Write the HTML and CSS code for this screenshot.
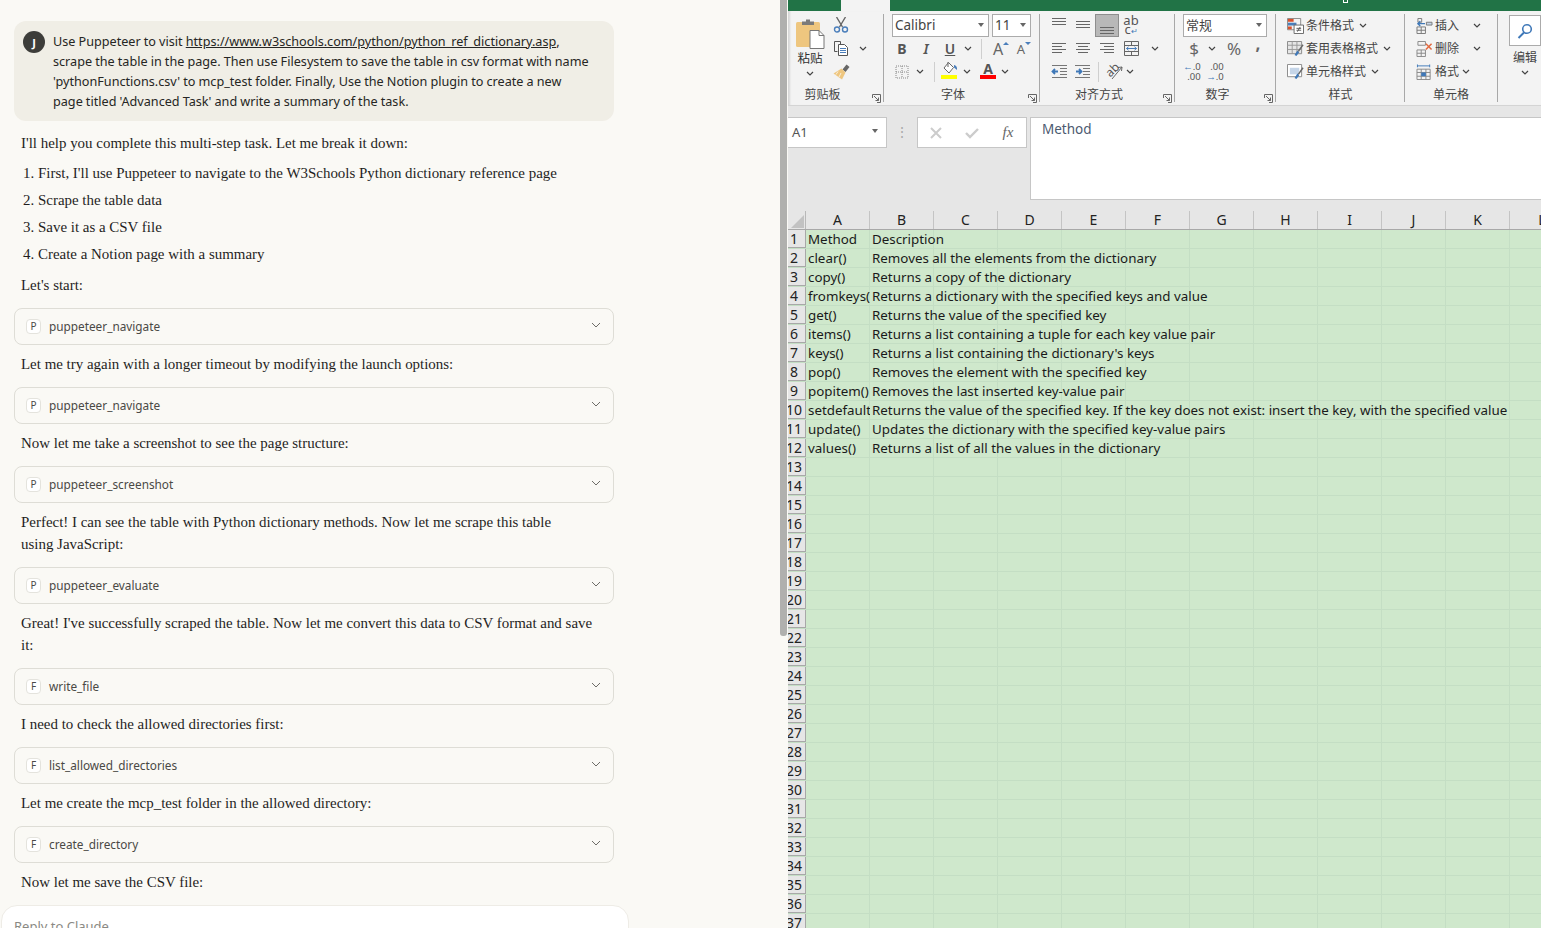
FILE: index.html
```html
<!DOCTYPE html>
<html lang="zh-CN">
<head>
<meta charset="UTF-8">
<title>Claude + Excel</title>
<link rel="stylesheet" href="styles.css">
</head>
<body>

<!-- chat on the left -->
<section class="chat">
    <div class="chat-scroll">
        <div class="user-msg">
            <span class="avatar">J</span>
            <p>Use Puppeteer to visit <a href="#">https://www.w3schools.com/python/python_ref_dictionary.asp</a>, scrape the table in the page. Then use Filesystem to save the table in csv format with name 'pythonFunctions.csv' to mcp_test folder. Finally, Use the Notion plugin to create a new page titled 'Advanced Task' and write a summary of the task.</p>
        </div>

        <p class="say first">I'll help you complete this multi-step task. Let me break it down:</p>
        <ol class="steps">
            <li>First, I'll use Puppeteer to navigate to the W3Schools Python dictionary reference page</li>
            <li>Scrape the table data</li>
            <li>Save it as a CSV file</li>
            <li>Create a Notion page with a summary</li>
        </ol>
        <p class="say">Let's start:</p>
        <div class="tool"><span class="tool-badge">P</span><span class="tool-name">puppeteer_navigate</span><svg class="tool-chev" viewBox="0 0 10 6"><path d="M1 1l4 4 4-4"/></svg></div>
        <p class="say">Let me try again with a longer timeout by modifying the launch options:</p>
        <div class="tool"><span class="tool-badge">P</span><span class="tool-name">puppeteer_navigate</span><svg class="tool-chev" viewBox="0 0 10 6"><path d="M1 1l4 4 4-4"/></svg></div>
        <p class="say">Now let me take a screenshot to see the page structure:</p>
        <div class="tool"><span class="tool-badge">P</span><span class="tool-name">puppeteer_screenshot</span><svg class="tool-chev" viewBox="0 0 10 6"><path d="M1 1l4 4 4-4"/></svg></div>
        <p class="say">Perfect! I can see the table with Python dictionary methods. Now let me scrape this table<br>using JavaScript:</p>
        <div class="tool"><span class="tool-badge">P</span><span class="tool-name">puppeteer_evaluate</span><svg class="tool-chev" viewBox="0 0 10 6"><path d="M1 1l4 4 4-4"/></svg></div>
        <p class="say">Great! I've successfully scraped the table. Now let me convert this data to CSV format and save<br>it:</p>
        <div class="tool"><span class="tool-badge">F</span><span class="tool-name">write_file</span><svg class="tool-chev" viewBox="0 0 10 6"><path d="M1 1l4 4 4-4"/></svg></div>
        <p class="say">I need to check the allowed directories first:</p>
        <div class="tool"><span class="tool-badge">F</span><span class="tool-name">list_allowed_directories</span><svg class="tool-chev" viewBox="0 0 10 6"><path d="M1 1l4 4 4-4"/></svg></div>
        <p class="say">Let me create the mcp_test folder in the allowed directory:</p>
        <div class="tool"><span class="tool-badge">F</span><span class="tool-name">create_directory</span><svg class="tool-chev" viewBox="0 0 10 6"><path d="M1 1l4 4 4-4"/></svg></div>
        <p class="say">Now let me save the CSV file:</p>
    </div>
    <div class="reply">Reply to Claude</div>
    <div class="scroll-thumb"></div>
</section>

<!-- excel on the right -->
<section class="excel">
    <div class="tabbar"><span class="tab-active"></span><span class="tab-mark"></span></div>

    <div class="ribbon">
        <div class="group g-clip">
            <div class="group-body clip-body">
                <div class="paste">
                    <svg class="paste-icon" viewBox="0 0 30 30"><rect x="1" y="3" width="24" height="25" rx="1.500" fill="#eec67f"/><path d="M7 6V2.500h4V.5h4v2h4V6z" fill="#7a7a7a"/><path d="M15 11.500h9l5 5V29.500H15z" fill="#fff" stroke="#777"/><path d="M24 11.500v5h5" fill="none" stroke="#777"/></svg>
                    <span class="paste-label">粘贴</span>
                    <svg class="chev" viewBox="0 0 8 5"><path d="M1 1l3 3 3-3"/></svg>
                </div>
                <div class="clip-tools">
                    <div class="row"><span class="tb w24"><svg class="cut" width="16" height="16" viewBox="0 0 16 16" fill="none"><path d="M3.500 0l6 10M12.500 0l-6 10" stroke="#666" stroke-width="1.400"/><circle cx="4" cy="12.500" r="2.500" stroke="#4a7ebb" stroke-width="1.400"/><circle cx="12" cy="12.500" r="2.500" stroke="#4a7ebb" stroke-width="1.400"/></svg></span></div>
                    <div class="row"><span class="tb w24"><svg width="16" height="15" viewBox="0 0 16 15" fill="none" stroke="#555"><path d="M1.500.5h6v3M1.500.5v10h3"/><path d="M5.500 3.500h6l3 3v8h-9z" fill="#fff"/><path d="M7 7.500h6M7 9.500h6M7 11.500h6" stroke="#4a7ebb"/></svg></span><span class="tb w20"><svg class="chev" viewBox="0 0 8 5"><path d="M1 1l3 3 3-3"/></svg></span></div>
                    <div class="row"><span class="tb w24"><svg width="17" height="16" viewBox="0 0 17 16"><path d="M9.500 5.500l4-5 3 2.500-4 5z" fill="#666"/><path d="M8.500 4.500l4 4-3.500 7-8.500-6z" fill="#eec67f"/><path d="M5 7.500l-2 3M8 9l-2 4" stroke="#fff" stroke-width=".7"/></svg></span></div>
                </div>
            </div>
            <div class="group-foot"><span class="group-label">剪贴板</span><svg class="launcher" viewBox="0 0 9 9"><path d="M.5 4V.5H8.500V8.500H5M2 2l4.500 4.500M3.500 6.500h3v-3"/></svg></div>
        </div>

        <div class="group g-font">
            <div class="group-body">
                <div class="row font-selects">
                    <span class="select sel-font">Calibri<i class="caret"></i></span>
                    <span class="select sel-size">11<i class="caret"></i></span>
                </div>
                <div class="row">
                    <span class="tb w24 glyph bold">B</span>
                    <span class="tb w24 glyph italic">I</span>
                    <span class="tb w24 glyph under">U</span>
                    <span class="tb w12"><svg class="chev" viewBox="0 0 8 5"><path d="M1 1l3 3 3-3"/></svg></span>
                    <span class="vsep sep-font1"></span>
                    <span class="tb w24 grow-a">A<i class="up"></i></span>
                    <span class="tb w22 shrink-a">A<i class="down"></i></span>
                </div>
                <div class="row">
                    <span class="tb w24"><svg width="14" height="14" viewBox="0 0 14 14" fill="none" stroke="#888" stroke-dasharray="1 1"><path d="M1 1h12v12H1zM7 1v12M1 7h12"/></svg></span>
                    <span class="tb w12"><svg class="chev" viewBox="0 0 8 5"><path d="M1 1l3 3 3-3"/></svg></span>
                    <span class="vsep sep-font2"></span>
                    <span class="tb w24 color-btn"><svg width="17" height="12" viewBox="0 0 17 12" fill="none"><path d="M3 6l4.500-5.500L12.500 5.500 8 11z" fill="#fff" stroke="#666"/><path d="M7 0V5" stroke="#666"/><path d="M13 3c2 .5 3.500 2 3 5l-3-2.500z" fill="#4a7ebb"/></svg><i class="bar yellow"></i></span>
                    <span class="tb w12"><svg class="chev" viewBox="0 0 8 5"><path d="M1 1l3 3 3-3"/></svg></span>
                    <span class="tb w22 color-btn font-a">A<i class="bar red"></i></span>
                    <span class="tb w12"><svg class="chev" viewBox="0 0 8 5"><path d="M1 1l3 3 3-3"/></svg></span>
                </div>
            </div>
            <div class="group-foot"><span class="group-label">字体</span><svg class="launcher" viewBox="0 0 9 9"><path d="M.5 4V.5H8.500V8.500H5M2 2l4.500 4.500M3.500 6.500h3v-3"/></svg></div>
        </div>

        <div class="group g-align">
            <div class="group-body">
                <div class="row">
                    <span class="tb w24"><svg width="14" height="19" viewBox="0 0 14 19" class="lines"><path d="M0 2.500h14M0 5.500h14M0 8.500h14"/></svg></span>
                    <span class="tb w24"><svg width="14" height="19" viewBox="0 0 14 19" class="lines"><path d="M0 5.500h14M0 8.500h14M0 11.500h14"/></svg></span>
                    <span class="tb w24 active"><svg width="14" height="19" viewBox="0 0 14 19" class="lines"><path d="M0 11.500h14M0 14.500h14M0 17.500h14"/></svg></span>
                    <span class="tb w24 wrap-ab">ab<br>c<em>↵</em></span>
                </div>
                <div class="row">
                    <span class="tb w24"><svg width="14" height="13" viewBox="0 0 14 13" class="lines"><path d="M0 1.500h14M0 4.500h10M0 7.500h14M0 10.500h10"/></svg></span>
                    <span class="tb w24"><svg width="14" height="13" viewBox="0 0 14 13" class="lines"><path d="M0 1.500h14M2 4.500h10M0 7.500h14M2 10.500h10"/></svg></span>
                    <span class="tb w24"><svg width="14" height="13" viewBox="0 0 14 13" class="lines"><path d="M0 1.500h14M4 4.500h10M0 7.500h14M4 10.500h10"/></svg></span>
                    <span class="tb w24"><svg width="15" height="15" viewBox="0 0 15 15" fill="none"><path d="M.5.5h14v14H.5zM.5 4.500h14M.5 10.500h14M7.500.5v4M7.500 10.500v4" stroke="#666"/><path d="M2.500 7.500h10M4.500 5.800L2.500 7.500l2 1.700M10.500 5.800l2 1.700-2 1.700" stroke="#4a7ebb"/></svg></span>
                    <span class="tb w24"><svg class="chev" viewBox="0 0 8 5"><path d="M1 1l3 3 3-3"/></svg></span>
                </div>
                <div class="row">
                    <span class="tb w24"><svg width="16" height="14" viewBox="0 0 16 14" fill="none"><path d="M1 .5h15M9 3.500h7M9 6.500h7M9 9.500h7M1 12.500h15" stroke="#777"/><path d="M7 6.500H1.500M4 4L1.500 6.500 4 9" stroke="#3f78b8" stroke-width="1.800"/></svg></span>
                    <span class="tb w24"><svg width="16" height="14" viewBox="0 0 16 14" fill="none"><path d="M0 .5h15M8 3.500h7M8 6.500h7M8 9.500h7M0 12.500h15" stroke="#777"/><path d="M1 6.500h5.500M4 4l2.500 2.500L4 9" stroke="#3f78b8" stroke-width="1.800"/></svg></span>
                    <span class="vsep sep-align"></span>
                    <span class="tb w20 orient"><svg width="20" height="18" viewBox="0 0 20 18" fill="none"><path d="M8 16L18 4" stroke="#666"/><path d="M18 4l-4 .5M18 4l-.5 4" stroke="#666"/></svg><b>ab</b></span>
                    <span class="tb w12"><svg class="chev" viewBox="0 0 8 5"><path d="M1 1l3 3 3-3"/></svg></span>
                </div>
            </div>
            <div class="group-foot"><span class="group-label">对齐方式</span><svg class="launcher" viewBox="0 0 9 9"><path d="M.5 4V.5H8.500V8.500H5M2 2l4.500 4.500M3.500 6.500h3v-3"/></svg></div>
        </div>

        <div class="group g-num">
            <div class="group-body">
                <div class="row"><span class="select sel-num">常规<i class="caret"></i></span></div>
                <div class="row">
                    <span class="tb w24 num-sign">$</span>
                    <span class="tb w12"><svg class="chev" viewBox="0 0 8 5"><path d="M1 1l3 3 3-3"/></svg></span>
                    <span class="tb w32 num-sign">%</span>
                    <span class="tb w16 num-sign comma">,</span>
                </div>
                <div class="row dec-row">
                    <span class="tb w24 dec"><span><em>←</em>.0<br>.00</span></span>
                    <span class="tb w24 dec"><span>.00<br><em>→</em>.0</span></span>
                </div>
            </div>
            <div class="group-foot"><span class="group-label">数字</span><svg class="launcher" viewBox="0 0 9 9"><path d="M.5 4V.5H8.500V8.500H5M2 2l4.500 4.500M3.500 6.500h3v-3"/></svg></div>
        </div>

        <div class="group g-style">
            <div class="group-body">
                <div class="row cmd">
                    <svg viewBox="0 0 18 17" fill="none"><path d="M.5.5h14v12H.5z" stroke="#888"/><path d="M1 1h6v3H1z" fill="#d9512c"/><path d="M1 5h9v3H1z" fill="#4a7ebb"/><path d="M1 9h4v3H1z" fill="#d9512c"/><path d="M7.500 7.500h10v9h-10z" fill="#fff" stroke="#666"/><path d="M10 11h5M10 13h5M14 9.500l-3 5" stroke="#555"/></svg>
                    <span>条件格式</span><svg class="chev" viewBox="0 0 8 5"><path d="M1 1l3 3 3-3"/></svg>
                </div>
                <div class="row cmd">
                    <svg viewBox="0 0 18 17" fill="none"><path d="M.5.5h15v13H.5z" fill="#e6e6e6" stroke="#888"/><path d="M.5 4.500h15M5.500.5v13M10.500.5v13M.5 9h15" stroke="#999"/><path d="M8 15l3-5 2 2-3 4z" fill="#3f78b8"/><path d="M12 11l5-7" stroke="#666" stroke-width="1.500"/></svg>
                    <span>套用表格格式</span><svg class="chev" viewBox="0 0 8 5"><path d="M1 1l3 3 3-3"/></svg>
                </div>
                <div class="row cmd">
                    <svg viewBox="0 0 18 17" fill="none"><path d="M.5.5h15v13H.5z" fill="#fff" stroke="#888"/><path d="M3 4h10v7H3z" fill="#c5d5e8"/><path d="M8 15l3-5 2 2-3 4z" fill="#3f78b8"/><path d="M12 11l5-7" stroke="#666" stroke-width="1.500"/></svg>
                    <span>单元格样式</span><svg class="chev" viewBox="0 0 8 5"><path d="M1 1l3 3 3-3"/></svg>
                </div>
            </div>
            <div class="group-foot"><span class="group-label">样式</span></div>
        </div>

        <div class="group g-cells">
            <div class="group-body">
                <div class="row cmd">
                    <svg viewBox="0 0 17 17" fill="none"><path d="M1.500.5h4v4h-4zM.5 9.500h9v7h-9zM5 9.500v7M.5 13h9" stroke="#777"/><path d="M10.500 4.500h6v3h-6z" fill="#c5d5e8" stroke="#777"/><path d="M9 6H1.500M4 3.500L1.500 6 4 8.500" stroke="#3f78b8" stroke-width="1.500"/></svg>
                    <span class="cell-text">插入</span><svg class="chev" viewBox="0 0 8 5"><path d="M1 1l3 3 3-3"/></svg>
                </div>
                <div class="row cmd">
                    <svg viewBox="0 0 17 17" fill="none"><path d="M1.500.5h8v4h-8zM.5 9.500h9v7h-9zM5 9.500v7M.5 13h9" stroke="#888"/><path d="M10 3l6 6M16 3l-6 6" stroke="#e2693f" stroke-width="1.600"/></svg>
                    <span class="cell-text">删除</span><svg class="chev" viewBox="0 0 8 5"><path d="M1 1l3 3 3-3"/></svg>
                </div>
                <div class="row cmd">
                    <svg viewBox="0 0 17 17" fill="none"><path d="M.5 5.500h14v11H.5zM.5 9h14M.5 13h14M5 5.500v11M10 5.500v11" stroke="#888"/><path d="M5 9h5v4H5z" fill="#3f78b8"/><path d="M1 2h13M1 .5v3M14 .5v3" stroke="#3f78b8"/></svg>
                    <span class="cell-text short">格式</span><svg class="chev" viewBox="0 0 8 5"><path d="M1 1l3 3 3-3"/></svg>
                </div>
            </div>
            <div class="group-foot"><span class="group-label">单元格</span></div>
        </div>

        <div class="g-edit">
            <span class="find"><svg width="16" height="16" viewBox="0 0 16 16" fill="none"><circle cx="10" cy="6" r="4.300" stroke="#3f78b8" stroke-width="1.600"/><path d="M7 9.500L1.500 15" stroke="#3f78b8" stroke-width="2"/></svg></span>
            <span class="edit-label">编辑</span>
            <svg class="chev" viewBox="0 0 8 5"><path d="M1 1l3 3 3-3"/></svg>
        </div>
    </div>

    <div class="formula-area">
        <div class="name-box">A1<i class="caret"></i></div>
        <span class="fx-grip">⋮</span>
        <div class="fx-buttons">
            <svg width="12" height="12" viewBox="0 0 12 12" fill="none"><path d="M1 1l10 10M11 1L1 11" stroke="#ccc" stroke-width="2"/></svg>
            <svg width="14" height="12" viewBox="0 0 14 12" fill="none"><path d="M1 6l4 4 8-8" stroke="#ccc" stroke-width="2.400"/></svg>
            <span class="fx">fx</span>
        </div>
        <div class="formula-input">Method</div>
    </div>

    <div class="sheet">
        <div class="col-head">
            <span class="corner"></span>
            <span>A</span><span>B</span><span>C</span><span>D</span><span>E</span><span>F</span><span>G</span><span>H</span><span>I</span><span>J</span><span>K</span><span class="col-l">L</span>
        </div>
        <div class="rows" id="rows"></div>
    </div>
</section>

<script src="sheet.js"></script>
</body>
</html>
```

FILE: sheet.js
```js
const dados = [
    ["Method", "Description"],
    ["clear()", "Removes all the elements from the dictionary"],
    ["copy()", "Returns a copy of the dictionary"],
    ["fromkeys()", "Returns a dictionary with the specified keys and value"],
    ["get()", "Returns the value of the specified key"],
    ["items()", "Returns a list containing a tuple for each key value pair"],
    ["keys()", "Returns a list containing the dictionary's keys"],
    ["pop()", "Removes the element with the specified key"],
    ["popitem()", "Removes the last inserted key-value pair"],
    ["setdefault()", "Returns the value of the specified key. If the key does not exist: insert the key, with the specified value"],
    ["update()", "Updates the dictionary with the specified key-value pairs"],
    ["values()", "Returns a list of all the values in the dictionary"]
];

const rows = document.getElementById("rows");

for (let i = 0; i < 37; i++) {
    const linha = dados[i] || ["", ""];
    const row = document.createElement("div");
    row.className = "sheet-row";
    row.innerHTML = `
        <span class="row-num">${i + 1}</span>
        <span class="cell-a">${linha[0]}</span>
        <span class="cell-b">${linha[1]}</span>
    `;
    rows.appendChild(row);
}
```

FILE: styles.css
```css
* {
    box-sizing: border-box;
}

html,
body {
    height: 100%;
}

body {
    display: flex;
    width: 1541px;
    height: 928px;
    margin: 0;
    overflow: hidden;
    background-color: #faf9f5;
}

/* chat */

.chat {
    position: relative;
    display: flex;
    flex-direction: column;
    width: 788px;
    height: 928px;
    overflow: hidden;
    background-color: #faf9f5;
}

.chat-scroll {
    flex: 1;
    width: 628px;
    min-height: 0;
    padding: 21px 14px 0;
    overflow: hidden;
}

.user-msg {
    display: flex;
    align-items: flex-start;
    gap: 8px;
    width: 600px;
    height: 100px;
    padding: 10px 20px 0 9px;
    background-color: #f0eee6;
    border-radius: 12px;
}

.avatar {
    display: flex;
    flex: none;
    align-items: center;
    justify-content: center;
    width: 22px;
    height: 22px;
    font: 700 11px "Noto Sans", sans-serif;
    color: #fff;
    background-color: #3d3d3a;
    border-radius: 50%;
}

.user-msg p {
    margin: 0;
    font: 12.650px/20px "Noto Sans", sans-serif;
    word-spacing: -0.2px;
    color: #262624;
}

.user-msg a {
    color: #262624;
}

.say {
    width: 590px;
    margin: 8px 0 12px 7px;
    font: 14.950px/22px "Liberation Serif", serif;
    color: #1f1e1d;
}

.say.first {
    margin-top: 11px;
}

.steps {
    margin: -4px 0 9px;
    padding: 0 0 0 24px;
    font: 14.950px/22px "Liberation Serif", serif;
    color: #1f1e1d;
}

.steps li {
    margin-bottom: 5px;
}

.steps li:last-child {
    margin-bottom: 0;
}

.tool {
    display: flex;
    align-items: center;
    width: 600px;
    height: 37px;
    padding: 0 12px 1px 11px;
    background-color: #faf9f5;
    border: 1px solid #deddd6;
    border-radius: 8px;
}

.tool-badge {
    display: flex;
    align-items: center;
    justify-content: center;
    width: 15px;
    height: 15px;
    font: 10px "Noto Sans", sans-serif;
    color: #4a4a48;
    background-color: #fff;
    border: 1px solid #e4e3dd;
    border-radius: 4px;
}

.tool-name {
    flex: 1;
    margin-left: 8px;
    font: 11.800px "Noto Sans", sans-serif;
    color: #4a4945;
}

.tool-chev {
    width: 10px;
    height: 6px;
    margin-bottom: 2px;
    fill: none;
    stroke: #6e6d68;
    stroke-width: 1;
}

.reply {
    flex: none;
    width: 628px;
    height: 40px;
    margin: 0 0 -17px 1px;
    padding: 11px 12px;
    font: 13px "Noto Sans", sans-serif;
    color: #8a8983;
    background-color: #fff;
    border: 1px solid #eeece6;
    border-radius: 16px;
}

.scroll-thumb {
    position: absolute;
    top: 0;
    right: 1px;
    width: 7px;
    height: 636px;
    background-color: #b0b0ae;
    border-radius: 0 0 3px 3px;
}

/* excel */

.excel {
    display: flex;
    flex-direction: column;
    width: 753px;
    height: 928px;
    overflow: hidden;
    background-color: #e6e6e6;
    font-family: "Noto Sans", "Noto Sans CJK SC", sans-serif;
}

.tabbar {
    display: flex;
    flex: none;
    height: 11px;
    padding-left: 53px;
    background-color: #217346;
}

.tab-active {
    display: block;
    width: 49px;
    height: 11px;
    background-color: #f3f3f3;
}

.tab-mark {
    width: 5px;
    height: 3px;
    margin-left: 453px;
    border: 1px solid #fff;
    border-top: 0;
}

.ribbon {
    display: flex;
    flex: none;
    height: 95px;
    padding-top: 3px;
    background-color: #f3f3f3;
    border-bottom: 1px solid #d4d4d4;
    box-shadow: inset 3px 0 2px -1px rgba(0, 0, 0, 0.12);
}

.group {
    display: flex;
    flex: none;
    flex-direction: column;
    height: 88px;
    border-right: 1px solid #a8a8a8;
}

.g-clip { width: 96px; }
.g-font { width: 156px; padding-left: 6px; }
.g-align { width: 135px; padding-left: 7px; }
.g-num { width: 101px; padding-left: 7px; }
.g-style { width: 129px; padding-left: 11px; }
.g-cells { width: 93px; padding-left: 11px; }

.g-clip .group-foot { padding-right: 26px; }
.g-font .group-foot { padding-right: 23px; }
.g-align .group-foot { padding-right: 23px; }
.g-num .group-foot { padding-right: 22px; }
.g-style .group-foot { padding-right: 10px; }
.g-cells .group-foot { padding-right: 11px; }

.group-body {
    height: 69px;
}

.clip-body {
    display: flex;
}

.row {
    display: flex;
    align-items: center;
    height: 23px;
}

.group-foot {
    position: relative;
    display: flex;
    flex: 1;
    align-items: center;
    justify-content: center;
    font: 12px "Noto Sans CJK SC", sans-serif;
    color: #444;
}

.group-label {
    margin-top: 2px;
}

.launcher {
    position: absolute;
    right: 2px;
    bottom: -1px;
    width: 9px;
    height: 9px;
    fill: none;
    stroke: #666;
    stroke-width: 1;
}

.chev {
    flex: none;
    width: 8px;
    height: 5px;
    fill: none;
    stroke: #444;
    stroke-width: 1.200;
}

.tb {
    display: flex;
    flex: none;
    align-items: center;
    justify-content: center;
    height: 23px;
}

.w12 { width: 12px; }
.w16 { width: 16px; }
.w20 { width: 20px; }
.w22 { width: 22px; }
.w24 { width: 24px; }
.w32 { width: 32px; }

.vsep {
    flex: none;
    width: 1px;
    height: 20px;
    background-color: #cfcfcf;
}

.sep-font1 { margin: 0 4px 0 7px; }
.sep-font2 { margin: 0 2px 0 8px; }
.sep-align { margin: 0 5px 0 3px; }

/* clipboard */

.paste {
    display: flex;
    flex-direction: column;
    align-items: center;
    width: 44px;
}

.paste-icon {
    width: 30px;
    height: 30px;
    margin-top: 5px;
}

.paste-label {
    margin-top: 1px;
    font: 12.500px/16px "Noto Sans CJK SC", sans-serif;
    color: #333;
}

.paste .chev {
    margin-top: 5px;
}

.clip-tools {
    margin-left: -3px;
}

.cut {
    margin-bottom: 2px;
}

/* font */

.font-selects {
    gap: 3px;
    padding-left: 2px;
}

.select {
    position: relative;
    display: flex;
    align-items: center;
    height: 23px;
    padding: 0 0 2px 2px;
    font-size: 13.500px;
    color: #444;
    background-color: #fff;
    border: 1px solid #ababab;
}

.sel-font { width: 97px; }
.sel-size { width: 39px; }
.sel-num {
    width: 84px;
    margin-left: 1px;
    font-family: "Noto Sans CJK SC", sans-serif;
    font-size: 13px;
}

.caret {
    position: absolute;
    top: 8px;
    right: 4px;
    border-top: 4px solid #666;
    border-right: 3px solid transparent;
    border-left: 3px solid transparent;
}

.glyph {
    font-size: 14px;
    color: #555;
}

.bold { font-weight: 700; }
.italic { font-style: italic; font-weight: 600; }
.under { font-weight: 600; text-decoration: underline; }

.grow-a,
.shrink-a {
    position: relative;
    font-size: 16px;
    color: #666;
}

.shrink-a { font-size: 13px; }

.up,
.down {
    position: absolute;
    top: 5px;
    right: 1px;
    border-right: 3px solid transparent;
    border-left: 3px solid transparent;
}

.up { border-bottom: 3px solid #4a7ebb; }
.down { border-top: 3px solid #4a7ebb; }

.color-btn {
    position: relative;
    flex-direction: column;
    justify-content: flex-start;
    padding-top: 2px;
}

.color-btn .bar {
    margin-top: 1px;
}

.font-a {
    margin-left: 4px;
    font: 700 14px/13px "Noto Sans", sans-serif;
    color: #555;
}

.font-a .bar {
    margin-top: 0;
}

.bar {
    display: block;
    width: 16px;
    height: 4px;
}

.yellow { background-color: #ffff00; }
.red { background-color: #ff0000; }

/* alignment */

.lines {
    fill: none;
    stroke: #666;
}

.active {
    height: 23px;
    background-color: #b8b8b8;
    border: 1px solid #8e8e8e;
}

.wrap-ab {
    display: block;
    padding-top: 2px;
    font: 13px/9px "Noto Sans", sans-serif;
    color: #555;
    text-align: center;
}

.wrap-ab em {
    font-size: 8px;
    font-style: normal;
    color: #3f78b8;
}

.orient {
    position: relative;
}

.orient b {
    position: absolute;
    top: 1px;
    left: 1px;
    font: 400 12px "Noto Sans", sans-serif;
    color: #555;
    transform: rotate(-45deg);
}

/* number */

.num-sign {
    font-size: 17px;
    color: #666;
}

.comma {
    padding-bottom: 10px;
    font-weight: 700;
}

.dec-row {
    margin-left: -2px;
}

.dec {
    font: 9.500px/10px "Noto Sans", sans-serif;
    color: #555;
    text-align: right;
}

.dec + .dec {
    margin-left: -1px;
}

.dec em {
    font-style: normal;
    color: #3f78b8;
}

/* styles + cells */

.cmd {
    gap: 2px;
    font: 12px "Noto Sans CJK SC", sans-serif;
    color: #444;
}

.cmd > svg:first-child {
    flex: none;
    width: 17px;
    height: 16px;
}

.cmd > span {
    flex: none;
    padding-bottom: 2px;
    white-space: nowrap;
}

.cmd .chev {
    margin-left: 3px;
}

.cell-text {
    width: 33px;
}

.cell-text.short {
    width: 24px;
}

.short + .chev {
    margin-left: 1px;
}

/* edit */

.g-edit {
    display: flex;
    flex: 1;
    flex-direction: column;
    align-items: center;
    padding-left: 11px;
}

.find {
    display: flex;
    align-items: center;
    justify-content: center;
    width: 32px;
    height: 31px;
    margin-top: 1px;
    background-color: #fff;
    border: 1px solid #ababab;
}

.edit-label {
    margin-top: 2px;
    font: 12px/18px "Noto Sans CJK SC", sans-serif;
    color: #444;
}

.g-edit .chev {
    margin-top: 4px;
}

/* formula bar */

.formula-area {
    display: flex;
    flex: none;
    align-items: flex-start;
    height: 105px;
    padding-top: 11px;
    background-color: #e6e6e6;
}

.name-box {
    position: relative;
    width: 99px;
    height: 31px;
    padding: 5px 4px;
    font-size: 13px;
    color: #555;
    background-color: #fff;
    border: 1px solid #c6c6c6;
    border-left: 0;
}

.name-box .caret {
    top: 11px;
    right: 8px;
}

.fx-grip {
    width: 30px;
    height: 31px;
    font-size: 14px;
    line-height: 30px;
    color: #aaa;
    text-align: center;
}

.fx-buttons {
    display: grid;
    grid-template-columns: repeat(3, 36px);
    align-items: center;
    justify-items: center;
    width: 110px;
    height: 31px;
    background-color: #fff;
    border: 1px solid #c6c6c6;
}

.fx {
    font: italic 15px "Liberation Serif", serif;
    color: #666;
}

.formula-input {
    flex: 1;
    height: 83px;
    margin-left: 3px;
    padding: 2px 11px;
    font-size: 13.500px;
    color: #4c5a70;
    background-color: #fff;
    border: 1px solid #c6c6c6;
    border-right: 0;
}

/* sheet */

.sheet {
    flex: 1;
    min-height: 0;
    overflow: hidden;
}

.col-head {
    display: flex;
    height: 19px;
    background-color: #e6e6e6;
    border-bottom: 1px solid #a8a8a8;
}

.col-head span {
    flex: none;
    width: 64px;
    font-size: 14px;
    line-height: 18px;
    color: #222;
    text-align: center;
    border-right: 1px solid #c4c4c4;
}

.col-head .corner {
    position: relative;
    width: 18px;
    border-right: 1px solid #b8b8b8;
}

.corner::after {
    content: "";
    position: absolute;
    right: 1px;
    bottom: 1px;
    border-bottom: 13px solid #c2c2c2;
    border-left: 13px solid transparent;
}

.col-head .col-l {
    border-right: 0;
}

.sheet-row {
    display: flex;
    height: 19px;
    font-size: 13.360px;
    line-height: 18px;
    color: #1a1a1a;
    background-color: #cfe8cc;
    background-image: repeating-linear-gradient(to right, transparent 0, transparent 63px, #c4dec4 63px, #c4dec4 64px);
    background-position: 18px 0;
    border-bottom: 1px solid #c4dec4;
}

.row-num {
    display: flex;
    flex: none;
    justify-content: center;
    width: 18px;
    padding-right: 5px;
    overflow: hidden;
    font-size: 14px;
    color: #222;
    background-color: #e6e6e6;
    border-right: 1px solid #a8a8a8;
    border-bottom: 1px solid #a8a8a8;
}

.cell-a {
    flex: none;
    width: 64px;
    padding-left: 2px;
    overflow: hidden;
    white-space: nowrap;
}

.cell-b {
    flex: none;
    padding-left: 2px;
    white-space: nowrap;
}
```
